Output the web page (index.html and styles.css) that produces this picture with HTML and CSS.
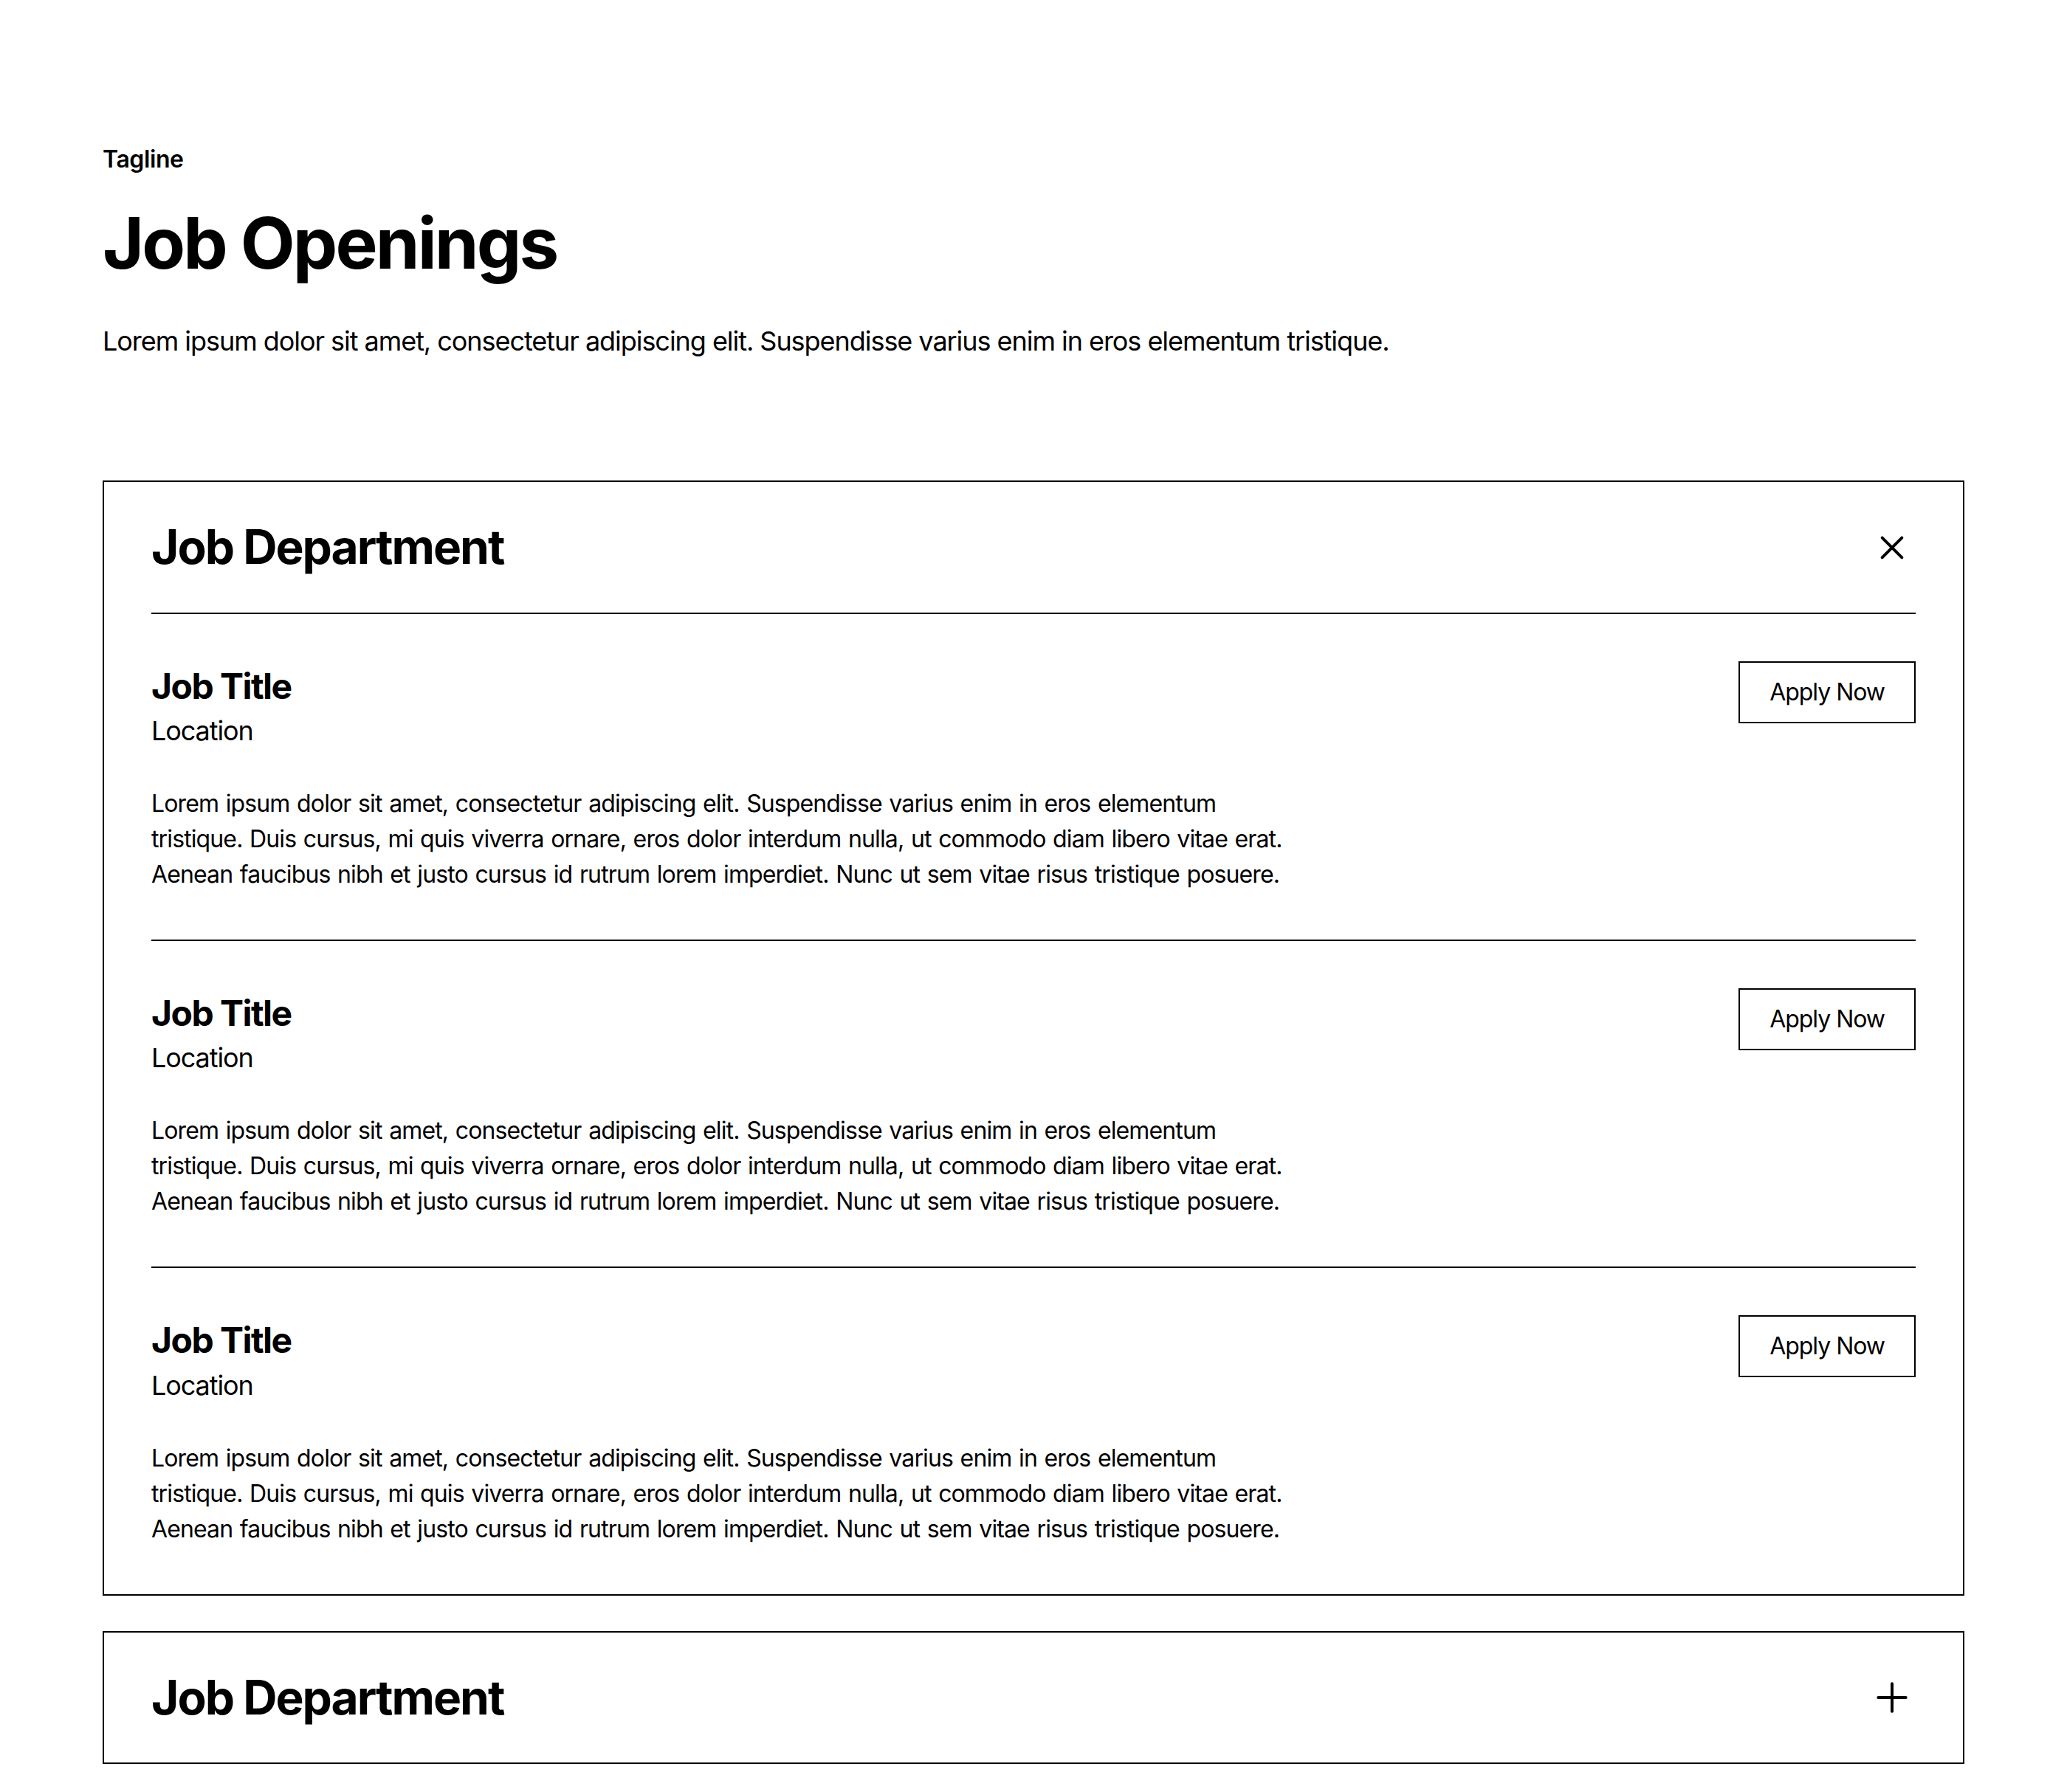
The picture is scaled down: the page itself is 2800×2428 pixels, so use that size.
FILE: index.html
```html
<!DOCTYPE html>
<html lang="en">
<head>
<meta charset="utf-8">
<title>Job Openings</title>
<link rel="stylesheet" href="styles.css">
</head>
<body>
<section class="careers">
  <header class="intro">
    <p class="tagline">Tagline</p>
    <h1 class="title">Job Openings</h1>
    <p class="lead">Lorem ipsum dolor sit amet, consectetur adipiscing elit. Suspendisse varius enim in eros elementum tristique.</p>
  </header>

  <div class="departments">
    <div class="dept open">
      <div class="dept-head">
        <h2 class="dept-name">Job Department</h2>
        <svg class="dept-icon" viewBox="0 0 24 24" fill="none" stroke="currentColor" stroke-width="1.5" stroke-linecap="round"><path d="M7 7L17 17M17 7L7 17"/></svg>
      </div>
      <div class="dept-body">
        <div class="job">
          <div class="job-text">
            <h3 class="job-title">Job Title</h3>
            <p class="job-loc">Location</p>
            <p class="job-desc">Lorem ipsum dolor sit amet, consectetur adipiscing elit. Suspendisse varius enim in eros elementum<br>tristique. Duis cursus, mi quis viverra ornare, eros dolor interdum nulla, ut commodo diam libero vitae erat.<br>Aenean faucibus nibh et justo cursus id rutrum lorem imperdiet. Nunc ut sem vitae risus tristique posuere.</p>
          </div>
          <button class="apply">Apply Now</button>
        </div>
        <div class="job">
          <div class="job-text">
            <h3 class="job-title">Job Title</h3>
            <p class="job-loc">Location</p>
            <p class="job-desc">Lorem ipsum dolor sit amet, consectetur adipiscing elit. Suspendisse varius enim in eros elementum<br>tristique. Duis cursus, mi quis viverra ornare, eros dolor interdum nulla, ut commodo diam libero vitae erat.<br>Aenean faucibus nibh et justo cursus id rutrum lorem imperdiet. Nunc ut sem vitae risus tristique posuere.</p>
          </div>
          <button class="apply">Apply Now</button>
        </div>
        <div class="job">
          <div class="job-text">
            <h3 class="job-title">Job Title</h3>
            <p class="job-loc">Location</p>
            <p class="job-desc">Lorem ipsum dolor sit amet, consectetur adipiscing elit. Suspendisse varius enim in eros elementum<br>tristique. Duis cursus, mi quis viverra ornare, eros dolor interdum nulla, ut commodo diam libero vitae erat.<br>Aenean faucibus nibh et justo cursus id rutrum lorem imperdiet. Nunc ut sem vitae risus tristique posuere.</p>
          </div>
          <button class="apply">Apply Now</button>
        </div>
      </div>
    </div>

    <div class="dept">
      <div class="dept-head">
        <h2 class="dept-name">Job Department</h2>
        <svg class="dept-icon" viewBox="0 0 24 24" fill="none" stroke="currentColor" stroke-width="1.5" stroke-linecap="round"><path d="M5 12H19M12 5V19"/></svg>
      </div>
    </div>
  </div>
</section>
</body>
</html>
```

FILE: styles.css
```css
* {
  box-sizing: border-box;
}

html, body {
  margin: 0;
  padding: 0;
  background: #fff;
}

body {
  font-family: Inter, "Noto Sans", "Liberation Sans", sans-serif;
  color: #000;
  letter-spacing: -0.025em;
}

.careers {
  padding: 192px 139px 36px;
}

.intro {
  margin-bottom: 162px;
}

.tagline {
  margin: 0 0 32px;
  font-size: 32px;
  line-height: 1.5;
  font-weight: 600;
}

.title {
  margin: 0 0 48px;
  font-size: 96px;
  line-height: 1.2;
  font-weight: 700;
  letter-spacing: -0.03em;
}

.lead {
  margin: 0;
  font-size: 36px;
  line-height: 1.5;
  font-weight: 400;
  letter-spacing: -0.029em;
}

.departments {
  display: flex;
  flex-direction: column;
  gap: 48px;
}

.dept {
  border: 2px solid #000;
}

.dept-head {
  display: flex;
  align-items: center;
  justify-content: space-between;
  gap: 40px;
  padding: 50px 64px;
}

.dept-name {
  margin: 0;
  font-size: 64px;
  line-height: 1.2;
  font-weight: 700;
  letter-spacing: -0.031em;
}

.dept-icon {
  width: 64px;
  height: 64px;
  flex: none;
  color: #000;
}

.dept-body {
  padding: 0 64px;
}

.job {
  display: flex;
  justify-content: space-between;
  align-items: flex-start;
  gap: 64px;
  padding: 64px 0;
  border-top: 2px solid #000;
}

.job-title {
  margin: 0;
  font-size: 48px;
  line-height: 1.4;
  font-weight: 700;
  letter-spacing: -0.032em;
}

.job-loc {
  margin: 0 0 48px;
  font-size: 36px;
  line-height: 1.5;
  letter-spacing: -0.03em;
}

.job-desc {
  margin: 0;
  max-width: 1700px;
  font-size: 32px;
  line-height: 1.5;
  letter-spacing: -0.0275em;
  word-spacing: 1.5px;
}

.apply {
  flex: none;
  background: transparent;
  border: 2px solid #000;
  padding: 16px 40px;
  font-family: Inter, "Noto Sans", sans-serif;
  font-size: 32px;
  line-height: 1.5;
  letter-spacing: -0.032em;
  color: #000;
  cursor: pointer;
}
```
